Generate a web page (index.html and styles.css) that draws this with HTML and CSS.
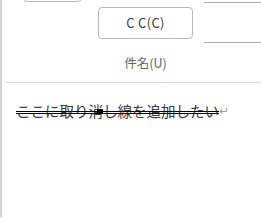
FILE: index.html
```html
<!DOCTYPE html>
<html lang="ja">
<head>
    <meta charset="UTF-8">
    <title>メール作成</title>
    <link rel="stylesheet" href="styles.css">
</head>
<body>
    <div class="pane">
        <div class="header">
            <div class="send-btn"></div>
            <div class="cc-row">
                <button class="cc-btn">C C(C)</button>
                <div class="cc-field"></div>
            </div>
            <div class="subject-row">
                <span class="subject-label">件名(U)</span>
            </div>
        </div>

        <div class="editor">
            <p class="line">
                <span class="strike">ここに取り消し線を追加したい</span><span class="para-mark">↵</span>
                <span class="caret"></span>
            </p>
        </div>
    </div>
</body>
</html>
```

FILE: styles.css
```css
:root {
    --border: #b9b9b9;
    --rule: #dcdcdc;
    --text: #3a3a3a;
    --muted: #666;
    --font-main: "Noto Sans CJK JP", "Open Sans", sans-serif;
}

* {
    box-sizing: border-box;
    margin: 0;
    padding: 0;
}

body {
    font-family: var(--font-main);
    background: white;
    color: var(--text);
    overflow: hidden;
}

.pane {
    display: flow-root;
    height: 217px;
    border-left: 2px solid #d2d2d2;
}

.header {
    display: flow-root;
    margin-left: 4px;
    border-bottom: 1px solid var(--rule);
}

.send-btn {
    width: 59px;
    height: 40px;
    margin-top: -38px;
    margin-left: 17px;
    border: 1px solid var(--border);
    border-radius: 4px;
}

.cc-row {
    display: flex;
    align-items: center;
    gap: 11px;
    padding-left: 92px;
}

.cc-btn {
    width: 95px;
    height: 32px;
    border: 1px solid var(--border);
    border-radius: 4px;
    background: white;
    font-family: var(--font-main);
    font-size: 13px;
    letter-spacing: 0.3px;
    color: var(--text);
}

.cc-field {
    flex: 1;
    height: 41px;
    border-top: 1px solid #ababab;
    border-bottom: 1px solid #ababab;
}

.subject-row {
    width: 95px;
    margin-left: 92px;
    height: 39px;
    display: flex;
    align-items: center;
    justify-content: center;
}

.subject-label {
    font-size: 12.5px;
    color: var(--muted);
}

.editor {
    padding: 18px 0 0 14px;
}

.line {
    position: relative;
    font-size: 14.5px;
    line-height: 20px;
    white-space: nowrap;
}

.strike {
    color: var(--text);
    text-decoration: line-through double black;
    text-decoration-thickness: 1px;
}

.para-mark {
    font-family: "DejaVu Sans", sans-serif;
    font-size: 12px;
    color: #a0a0a0;
    vertical-align: 2px;
}

.caret {
    position: absolute;
    left: 81px;
    top: 8px;
    width: 6px;
    height: 5px;
    background: black;
}
```
